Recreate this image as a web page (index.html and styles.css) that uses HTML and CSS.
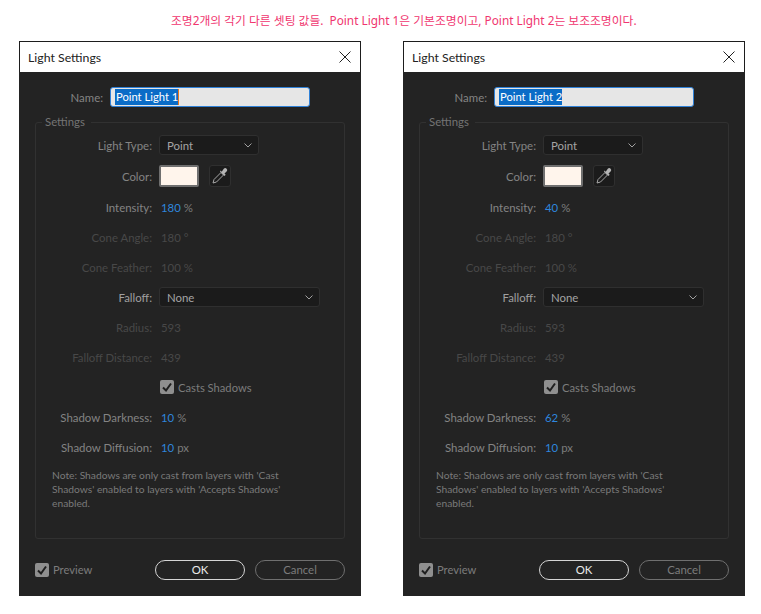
FILE: index.html
```html
<!DOCTYPE html>
<html lang="ko">
<head>
<meta charset="utf-8">
<title>Light Settings</title>
<link rel="stylesheet" href="styles.css">
</head>
<body>
<p class="caption">조명2개의 각기 다른 셋팅 값들.&nbsp; Point Light 1은 기본조명이고, Point Light 2는 보조조명이다.</p>
<main class="dialogs">
  <section class="dialog">
    <header class="titlebar"><span>Light Settings</span>
      <svg class="close" viewBox="0 0 12 12"><path d="M.5.5l11 11M11.5.5l-11 11"/></svg></header>
    <div class="name-row"><span class="name-label">Name:</span><span class="name-input"><span class="selected">Point Light 1</span><span class="caret"></span></span></div>
    <div class="panel">
      <span class="legend">Settings</span>
      <div class="row"><span class="label">Light Type:</span><span class="select short">Point<svg class="chev" viewBox="0 0 8 5"><path d="M.5.5L4 4 7.500.5"/></svg></span></div>
      <div class="row tall"><span class="label">Color:</span><span class="color-group"><span class="swatch"></span><span class="dropper"><svg viewBox="0 0 18 18"><path class="dropper-tip" d="M10 5.500L3 12.500 2 16 5.500 15 12.500 8z"/><path class="dropper-head" d="M9 4.500l4.500 4.500 1.200-1.200-1.200-1.200 2.300-2.300a2 2 0 0 0-2.800-2.800L10.700 4.800 9.500 3.600z"/></svg></span></span></div>
      <div class="row"><span class="label">Intensity:</span><span class="value"><b>180</b> %</span></div>
      <div class="row off"><span class="label">Cone Angle:</span><span class="value">180 °</span></div>
      <div class="row off"><span class="label">Cone Feather:</span><span class="value">100 %</span></div>
      <div class="row"><span class="label bright">Falloff:</span><span class="select wide">None<svg class="chev" viewBox="0 0 8 5"><path d="M.5.5L4 4 7.500.5"/></svg></span></div>
      <div class="row off"><span class="label">Radius:</span><span class="value">593</span></div>
      <div class="row off"><span class="label">Falloff Distance:</span><span class="value">439</span></div>
      <div class="row"><span></span><span class="check"><span class="box"><svg viewBox="0 0 14 14"><path d="M3 7.500l3 3 5-7"/></svg></span>Casts Shadows</span></div>
      <div class="row"><span class="label">Shadow Darkness:</span><span class="value"><b>10</b> %</span></div>
      <div class="row"><span class="label">Shadow Diffusion:</span><span class="value"><b>10</b> px</span></div>
      <p class="note">Note: Shadows are only cast from layers with 'Cast<br>Shadows' enabled to layers with 'Accepts Shadows'<br>enabled.</p>
    </div>
    <footer class="footer">
      <span class="check"><span class="box"><svg viewBox="0 0 14 14"><path d="M3 7.500l3 3 5-7"/></svg></span><span class="check-text">Preview</span></span>
      <span class="buttons"><span class="btn primary">OK</span><span class="btn">Cancel</span></span>
    </footer>
  </section>
  <section class="dialog">
    <header class="titlebar"><span>Light Settings</span>
      <svg class="close" viewBox="0 0 12 12"><path d="M.5.5l11 11M11.5.5l-11 11"/></svg></header>
    <div class="name-row"><span class="name-label">Name:</span><span class="name-input"><span class="selected">Point Light 2</span></span></div>
    <div class="panel">
      <span class="legend">Settings</span>
      <div class="row"><span class="label">Light Type:</span><span class="select short">Point<svg class="chev" viewBox="0 0 8 5"><path d="M.5.5L4 4 7.500.5"/></svg></span></div>
      <div class="row tall"><span class="label">Color:</span><span class="color-group"><span class="swatch"></span><span class="dropper"><svg viewBox="0 0 18 18"><path class="dropper-tip" d="M10 5.500L3 12.500 2 16 5.500 15 12.500 8z"/><path class="dropper-head" d="M9 4.500l4.500 4.500 1.200-1.200-1.200-1.200 2.300-2.300a2 2 0 0 0-2.800-2.800L10.700 4.800 9.500 3.600z"/></svg></span></span></div>
      <div class="row"><span class="label">Intensity:</span><span class="value"><b>40</b> %</span></div>
      <div class="row off"><span class="label">Cone Angle:</span><span class="value">180 °</span></div>
      <div class="row off"><span class="label">Cone Feather:</span><span class="value">100 %</span></div>
      <div class="row"><span class="label bright">Falloff:</span><span class="select wide">None<svg class="chev" viewBox="0 0 8 5"><path d="M.5.5L4 4 7.500.5"/></svg></span></div>
      <div class="row off"><span class="label">Radius:</span><span class="value">593</span></div>
      <div class="row off"><span class="label">Falloff Distance:</span><span class="value">439</span></div>
      <div class="row"><span></span><span class="check"><span class="box"><svg viewBox="0 0 14 14"><path d="M3 7.500l3 3 5-7"/></svg></span>Casts Shadows</span></div>
      <div class="row"><span class="label">Shadow Darkness:</span><span class="value"><b>62</b> %</span></div>
      <div class="row"><span class="label">Shadow Diffusion:</span><span class="value"><b>10</b> px</span></div>
      <p class="note">Note: Shadows are only cast from layers with 'Cast<br>Shadows' enabled to layers with 'Accepts Shadows'<br>enabled.</p>
    </div>
    <footer class="footer">
      <span class="check"><span class="box"><svg viewBox="0 0 14 14"><path d="M3 7.500l3 3 5-7"/></svg></span><span class="check-text">Preview</span></span>
      <span class="buttons"><span class="btn primary">OK</span><span class="btn">Cancel</span></span>
    </footer>
  </section>
</main>
</body>
</html>
```
FILE: styles.css
```css
* { box-sizing: border-box; }
html, body { margin: 0; padding: 0; background: #fff; }
body { width: 761px; height: 614px; overflow: hidden; font-family: "Lato", "Noto Sans CJK KR", sans-serif; font-size: 11px; }
.caption { margin: 0; height: 41px; padding-left: 171px; line-height: 40px; font-family: "Noto Sans", "Noto Sans CJK KR", sans-serif; font-size: 11.800px; color: #f0366f; white-space: nowrap; }
.dialogs { display: flex; gap: 42px; padding-left: 19px; }
.dialog { width: 342px; height: 555px; background: #232323; display: flex; flex-direction: column; }
.titlebar { height: 31px; flex: none; background: #fff; border: 1px solid #1d1d1d; border-bottom: 0; display: flex; align-items: center; justify-content: space-between; padding: 0 9px 0 8px; color: #222; font-size: 12.300px; }
.close { width: 12px; height: 12px; fill: none; stroke: #222; stroke-width: 1; }
.name-row { display: flex; align-items: center; height: 20px; margin-top: 15px; padding-left: 43px; gap: 7px; color: #848484; font-size: 11.400px; }
.name-label { width: 41px; text-align: right; }
.name-input { width: 200px; height: 20px; background: #e6e6e6; border: 1px solid #2f81d8; border-radius: 3px; padding-left: 4px; display: flex; align-items: center; color: #fff; font-size: 11.200px; }
.selected { background: #0a6cc7; line-height: 16px; padding: 0 0 0 1px; }
.caret { width: 1px; height: 16px; background: #e8761c; }
.panel { position: relative; width: 310px; height: 417px; margin: 15px 0 0 16px; border: 1px solid #313131; border-radius: 3px; padding-top: 7px; }
.legend { position: absolute; top: -9px; left: 6px; padding: 0 6px 0 3px; background: #232323; color: #747474; font-size: 11.400px; line-height: 16px; }
.row { display: grid; grid-template-columns: 116px 1fr; column-gap: 7px; align-items: center; height: 30px; color: #848484; font-size: 11.400px; }
.row.tall { height: 32px; }
.row.off, .row.off .value { color: #484848; }
.label { text-align: right; white-space: nowrap; }
.bright { color: #a0a0a0; }
.value { padding-left: 2px; color: #7c7c7c; }
.value b { font-weight: 400; color: #2e86de; }
.select { height: 20px; background: #1b1b1b; border: 1px solid #2f2f2f; border-radius: 3px; padding: 0 6px 0 7px; display: flex; align-items: center; justify-content: space-between; color: #a4a4a4; }
.short { width: 100px; }
.wide { width: 161px; }
.chev { width: 8px; height: 5px; fill: none; stroke: #a0a0a0; stroke-width: 1; }
.color-group { display: flex; gap: 10px; }
.swatch { width: 40px; height: 22px; background: #fff5ec; border: 2px solid #6f6f6f; border-radius: 2px; }
.dropper { width: 22px; height: 22px; background: #1b1b1b; border: 1px solid #2f2f2f; border-radius: 3px; display: flex; align-items: center; justify-content: center; }
.dropper svg { width: 18px; height: 18px; }
.dropper-tip { fill: #1b1b1b; stroke: #a8a8a8; stroke-width: 1; }
.dropper-head { fill: #b5b5b5; }
.check { display: flex; align-items: center; gap: 4px; padding-left: 1px; color: #7c7c7c; font-size: 11.200px; }
.box { width: 14px; height: 14px; background: #8f8f8f; border-radius: 2px; display: flex; }
.box svg { width: 14px; height: 14px; fill: none; stroke: #1f1f1f; stroke-width: 2; }
.note { margin: 6px 0 0 16px; color: #7a7a7a; font-size: 10.250px; line-height: 14px; white-space: nowrap; }
.footer { display: flex; align-items: center; justify-content: space-between; width: 310px; height: 20px; margin: 21px 0 0 16px; }
.footer .check { padding-left: 0; }
.check-text { padding-bottom: 2px; }
.buttons { display: flex; gap: 10px; }
.btn { width: 90px; height: 20px; padding-bottom: 1px; border: 1px solid #6f6f6f; border-radius: 10px; display: flex; align-items: center; justify-content: center; color: #7c7c7c; font-size: 11.400px; }
.primary { border-color: #d4d4d4; color: #eaeaea; }
```
